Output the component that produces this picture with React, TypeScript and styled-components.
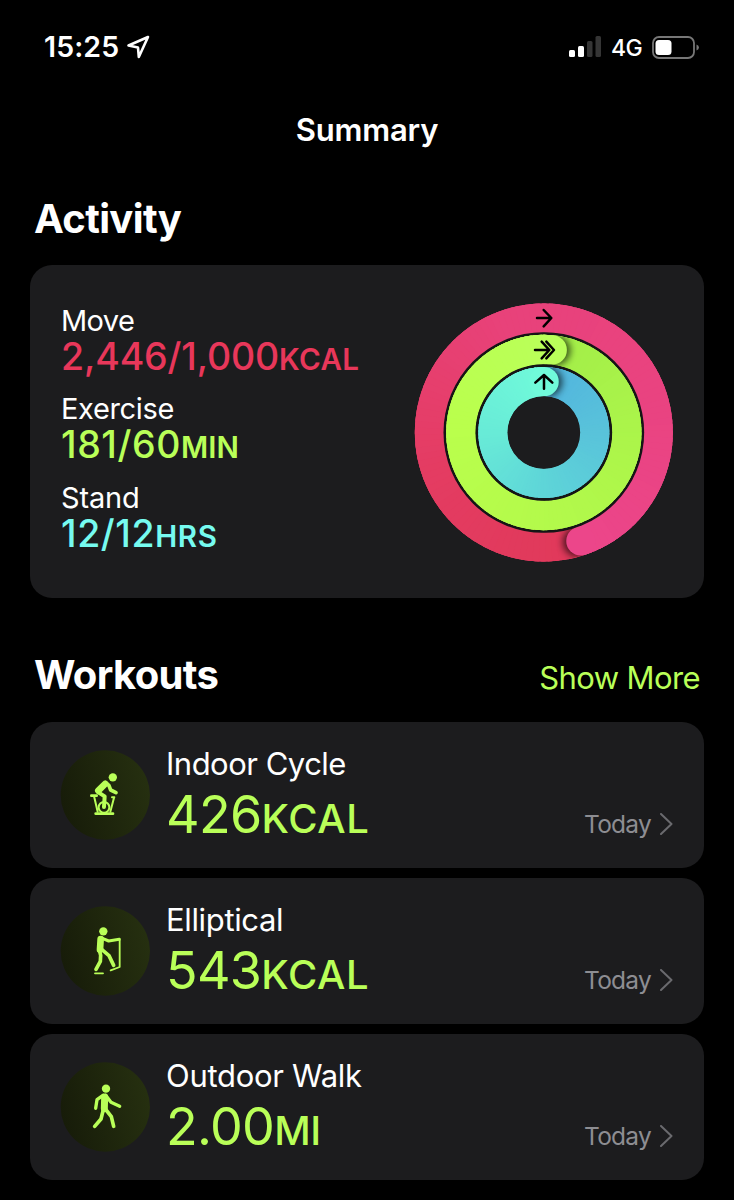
import React from "react";
import styled, { createGlobalStyle } from "styled-components";

const GlobalStyle = createGlobalStyle`
  * { box-sizing: border-box; }
  body {
    margin: 0;
    background: #000;
    color: #fff;
    font-family: Inter, "Liberation Sans", sans-serif;
    overflow: hidden;
  }
`;

const Screen = styled.main`
  width: 734px;
  height: 1200px;
  padding: 0 30px;
  background: #000;
  overflow: hidden;
`;

const StatusBar = styled.header`
  display: flex;
  justify-content: space-between;
  height: 94px;
  padding: 0 4px 0 14px;
`;

const StatusGroup = styled.div`
  display: flex;
  align-items: center;
  height: 94px;
`;

const Clock = styled.span`
  font-size: 28.5px;
  font-weight: 600;
  line-height: 36px;
  letter-spacing: 0.1px;
  margin: 0 7px 1px 0;
`;

const Network = styled.span`
  font-size: 23px;
  font-weight: 500;
  line-height: 30px;
  margin: 1px 10px 0 9px;
  letter-spacing: -0.6px;
`;

const NavTitle = styled.h1`
  margin: 0;
  height: 72px;
  font-size: 31px;
  font-weight: 600;
  line-height: 72px;
  text-align: center;
  letter-spacing: -0.2px;
`;

const SectionHead = styled.div<{ $top: number }>`
  display: flex;
  justify-content: space-between;
  align-items: center;
  height: 50px;
  margin-top: ${(p) => p.$top}px;
  padding: 0 4px;
`;

const SectionTitle = styled.h2`
  margin: 0;
  font-size: 40px;
  font-weight: 700;
  line-height: 50px;
  letter-spacing: -0.65px;
`;

const ShowMore = styled.a`
  color: #b9ff58;
  font-size: 31px;
  line-height: 40px;
  margin-top: 6px;
  letter-spacing: -0.6px;
`;

const Card = styled.section`
  background: #1c1c1e;
  border-radius: 22px;
`;

const ActivityCard = styled(Card)`
  display: flex;
  justify-content: space-between;
  height: 333px;
  margin-top: 21px;
  padding: 30px 19px 0 31px;
`;

const Metrics = styled.div`
  display: flex;
  flex-direction: column;
  gap: 19.3px;
  padding-top: 8px;
`;

const MetricLabel = styled.div<{ $spacing: number }>`
  font-size: 29px;
  font-weight: 400;
  line-height: 36px;
  letter-spacing: ${(p) => p.$spacing}px;
`;

const MetricValue = styled.div<{ $color: string; $spacing: number }>`
  color: ${(p) => p.$color};
  font-size: 37.5px;
  font-weight: 500;
  line-height: 35px;
  height: 33px;
  letter-spacing: ${(p) => p.$spacing}px;
  white-space: nowrap;
`;

const Unit = styled.span<{ $size: number; $spacing: number; $weight: number }>`
  font-size: ${(p) => p.$size}px;
  font-weight: ${(p) => p.$weight};
  line-height: 0;
  letter-spacing: ${(p) => p.$spacing}px;
`;

const WorkoutList = styled.div`
  display: flex;
  flex-direction: column;
  gap: 10px;
  margin-top: 22px;
`;

const WorkoutCard = styled(Card)`
  display: flex;
  height: 146px;
  padding: 22px 31px 0 30px;
`;

const WorkoutText = styled.div`
  flex: 1;
  margin-left: 15px;
`;

const WorkoutName = styled.div<{ $spacing: number }>`
  font-size: 31px;
  line-height: 39px;
  letter-spacing: ${(p) => p.$spacing}px;
`;

const WorkoutValue = styled.div`
  margin-top: 6px;
  color: #b9ff58;
  font-size: 52px;
  font-weight: 400;
  line-height: 51px;
  letter-spacing: -0.7px;
`;

const Day = styled.div`
  display: flex;
  align-items: center;
  gap: 9px;
  height: 32px;
  margin-top: 64px;
  color: #8d8d92;
  font-size: 24.5px;
  line-height: 32px;
  letter-spacing: -0.75px;
`;

const IconSvg = styled.svg`
  display: block;
  flex: none;
  margin-top: 6px;
`;

const Graphic = styled.svg`
  display: block;
  flex: none;
`;

type RGB = [number, number, number];
const CX = 416.5;
const CY = 412.5;

const point = (r: number, deg: number) => {
  const a = (deg * Math.PI) / 180;
  return [CX + r * Math.sin(a), CY - r * Math.cos(a)];
};

const mix = (stops: RGB[], t: number) => {
  const s = t * (stops.length - 1);
  const i = Math.min(Math.floor(s), stops.length - 2);
  const c = stops[i].map((v, k) => Math.round(v + (stops[i + 1][k] - v) * (s - i)));
  return `rgb(${c.join(",")})`;
};

interface RingProps {
  id: string;
  radius: number;
  width: number;
  tip: number;
  stops: RGB[];
}

function Ring({ id, radius, width, tip, stops }: RingProps) {
  const steps = 120;
  const step = 360 / steps;
  const inner = radius - width / 2;
  const outer = radius + width / 2;
  const [tx, ty] = point(radius, tip);
  const [sx, sy] = point(radius, tip + 600 / radius);
  return (
    <g>
      <clipPath id={`${id}-band`}>
        <path
          clipRule="evenodd"
          d={`M${CX - outer} ${CY}a${outer} ${outer} 0 1 0 ${outer * 2} 0a${outer} ${outer} 0 1 0 ${-outer * 2} 0M${CX - inner} ${CY}a${inner} ${inner} 0 1 0 ${inner * 2} 0a${inner} ${inner} 0 1 0 ${-inner * 2} 0`}
        />
      </clipPath>
      <circle cx={CX} cy={CY} r={radius} fill="none" stroke={mix(stops, 0.5)} strokeWidth={width} />
      {Array.from({ length: steps }, (_, i) => {
        const a = tip + i * step;
        const [x1, y1] = point(radius, a);
        const [x2, y2] = point(radius, a + step + (i < steps - 1 ? 2 : 0));
        return (
          <path
            key={i}
            d={`M${x1} ${y1}A${radius} ${radius} 0 0 1 ${x2} ${y2}`}
            fill="none"
            stroke={mix(stops, i / (steps - 1))}
            strokeWidth={width}
          />
        );
      })}
      <g clipPath={`url(#${id}-band)`}>
        <circle cx={sx} cy={sy} r={width / 2} fill="#000" opacity="0.65" filter="url(#soft)" />
      </g>
      {Array.from({ length: 12 }, (_, i) => {
        const a = tip - (12 - i) * step;
        const [x1, y1] = point(radius, a);
        const [x2, y2] = point(radius, a + step + (i < 11 ? 2 : 0.3));
        return (
          <path
            key={i}
            d={`M${x1} ${y1}A${radius} ${radius} 0 0 1 ${x2} ${y2}`}
            fill="none"
            stroke={mix(stops, (steps - 12 + i) / (steps - 1))}
            strokeWidth={width}
          />
        );
      })}
      <circle cx={tx} cy={ty} r={width / 2} fill={mix(stops, 1)} />
    </g>
  );
}

function ActivityRings() {
  return (
    <Graphic width="280" height="280" viewBox="0 0 840 840">
      <defs>
        <filter id="soft" x="-50%" y="-50%" width="200%" height="200%">
          <feGaussianBlur stdDeviation="11" />
        </filter>
      </defs>
      <Ring id="move" radius={343.5} width={87} tip={161.2} stops={[[224, 57, 90], [228, 60, 98], [232, 66, 122], [233, 67, 128], [236, 70, 138]]} />
      <circle cx={CX} cy={CY} r="301" fill="#151516" />
      <Ring id="exercise" radius={249} width={88} tip={5.8} stops={[[163, 238, 73], [172, 245, 74], [180, 250, 75], [186, 255, 76], [186, 255, 90]]} />
      <circle cx={CX} cy={CY} r="205" fill="#151516" />
      <Ring id="stand" radius={152.5} width={88} tip={0.3} stops={[[82, 180, 222], [89, 195, 218], [94, 213, 216], [104, 235, 215], [112, 250, 218]]} />
      <circle cx={CX} cy={CY} r="109" fill="#1c1c1e" />
      <g fill="none" stroke="#000" strokeWidth="7.5" strokeLinecap="round" strokeLinejoin="round">
        <path d="M396 69H438M416 45L439 69L416 94" />
        <path d="M390 165H433M410 140L433 165L410 190M424 140L447 165L424 190" />
        <path d="M417 281V240M391 263L417 240L442 263" />
      </g>
    </Graphic>
  );
}

type WorkoutKind = "cycle" | "elliptical" | "walk";

const glyphs: Record<WorkoutKind, React.ReactNode> = {
  cycle: (
    <>
      <circle cx="189.500" cy="112" r="12.500" fill="#b9ff58" stroke="none" />
      <path d="M166 132L146 152" strokeWidth="20" />
      <path d="M168 127L178 137L183 150L199 158" strokeWidth="11" />
      <path d="M146 157L165 169L163 201" strokeWidth="12" />
      <path d="M125 167H141" strokeWidth="8" />
      <path d="M133 168L144 215M193 173L182 215" strokeWidth="6" />
      <path d="M187 172H194" strokeWidth="6" />
      <circle cx="163" cy="202" r="16" strokeWidth="6" />
      <path d="M138 221H190" strokeWidth="8" />
    </>
  ),
  elliptical: (
    <>
      <circle cx="161" cy="106" r="12.500" fill="#b9ff58" stroke="none" />
      <path d="M153 129L151 161" strokeWidth="20" />
      <path d="M153 125L177 135L209 130" strokeWidth="9" />
      <path d="M149 162L153 178L152 196L139 220" strokeWidth="11" />
      <path d="M156 160L178 179L192 208" strokeWidth="11" />
      <path d="M210 132V213L183 223" strokeWidth="5.500" />
      <path d="M136 232H160" strokeWidth="5.500" />
    </>
  ),
  walk: (
    <>
      <circle cx="169" cy="110" r="12.500" fill="#b9ff58" stroke="none" />
      <path d="M165 135L164 170" strokeWidth="21" />
      <path d="M160 130L142 143L138 169" strokeWidth="10" />
      <path d="M168 130L184 151L210 163" strokeWidth="10" />
      <path d="M161 173L154 201L135 223" strokeWidth="11" />
      <path d="M167 171L185 194L192 223" strokeWidth="11" />
    </>
  ),
};

function WorkoutIcon({ kind }: { kind: WorkoutKind }) {
  return (
    <IconSvg width="91" height="90" viewBox="31 30 273 270">
      <defs>
        <linearGradient id={`disc-${kind}`} x1="0" y1="0.55" x2="1" y2="0.3">
          <stop offset="0" stopColor="#171c09" />
          <stop offset="1" stopColor="#263010" />
        </linearGradient>
      </defs>
      <circle cx="167" cy="165" r="134" fill={`url(#disc-${kind})`} />
      <g fill="none" stroke="#b9ff58" strokeLinecap="round" strokeLinejoin="round">
        {glyphs[kind]}
      </g>
    </IconSvg>
  );
}

const metrics = [
  { label: "Move", value: "2,446/1,000", unit: "KCAL", color: "#e8375a", spacing: -0.15, labelSpacing: -0.6, unitSpacing: 0.4 },
  { label: "Exercise", value: "181/60", unit: "MIN", color: "#b9ff58", spacing: 0.6, labelSpacing: -0.35, unitSpacing: 0 },
  { label: "Stand", value: "12/12", unit: "HRS", color: "#76fbf0", spacing: 0.6, labelSpacing: -0.15, unitSpacing: 0.6 },
];

const workouts: { kind: WorkoutKind; name: string; value: string; unit: string; spacing: number; unitSpacing: number }[] = [
  { kind: "cycle", name: "Indoor Cycle", value: "426", unit: "KCAL", spacing: -0.5, unitSpacing: 0.6 },
  { kind: "elliptical", name: "Elliptical", value: "543", unit: "KCAL", spacing: -0.35, unitSpacing: 0.6 },
  { kind: "walk", name: "Outdoor Walk", value: "2.00", unit: "MI", spacing: -0.3, unitSpacing: -0.4 },
];

export default function App() {
  return (
    <Screen>
      <GlobalStyle />
      <StatusBar>
        <StatusGroup>
          <Clock>15:25</Clock>
          <Graphic width="24" height="24" viewBox="0 0 24 24">
            <path d="M22 2L2.500 10.500L12 12.500L12.800 22Z" fill="none" stroke="#fff" strokeWidth="2.600" strokeLinejoin="round" />
          </Graphic>
        </StatusGroup>
        <StatusGroup>
          <Graphic width="33" height="22" viewBox="0 0 33 22">
            <rect x="0" y="14" width="6" height="7" rx="1.500" fill="#fff" />
            <rect x="9" y="10" width="6" height="11" rx="1.500" fill="#fff" />
            <rect x="18" y="5" width="5.500" height="16" rx="1.500" fill="#353535" />
            <rect x="26.500" y="0" width="5.500" height="21" rx="1.500" fill="#353535" />
          </Graphic>
          <Network>4G</Network>
          <Graphic width="48" height="23" viewBox="0 0 48 23">
            <rect x="1" y="1" width="41" height="21" rx="6" fill="none" stroke="#777" strokeWidth="1.800" />
            <rect x="3.500" y="4" width="16" height="15" rx="3.500" fill="#fff" />
            <path d="M44.500 8.500Q47 9.500 47 11.500T44.500 14.500Z" fill="#777" />
          </Graphic>
        </StatusGroup>
      </StatusBar>
      <NavTitle>Summary</NavTitle>
      <SectionHead $top={28}>
        <SectionTitle>Activity</SectionTitle>
      </SectionHead>
      <ActivityCard>
        <Metrics>
          {metrics.map((m) => (
            <div key={m.label}>
              <MetricLabel $spacing={m.labelSpacing}>{m.label}</MetricLabel>
              <MetricValue $color={m.color} $spacing={m.spacing}>
                {m.value}
                <Unit $size={29.5} $spacing={m.unitSpacing} $weight={600}>{m.unit}</Unit>
              </MetricValue>
            </div>
          ))}
        </Metrics>
        <ActivityRings />
      </ActivityCard>
      <SectionHead $top={52}>
        <SectionTitle>Workouts</SectionTitle>
        <ShowMore>Show More</ShowMore>
      </SectionHead>
      <WorkoutList>
        {workouts.map((w) => (
          <WorkoutCard key={w.kind}>
            <WorkoutIcon kind={w.kind} />
            <WorkoutText>
              <WorkoutName $spacing={w.spacing}>{w.name}</WorkoutName>
              <WorkoutValue>
                {w.value}
                <Unit $size={40} $spacing={w.unitSpacing} $weight={500}>{w.unit}</Unit>
              </WorkoutValue>
            </WorkoutText>
            <Day>
              Today
              <Graphic width="13" height="22" viewBox="0 0 13 22">
                <path d="M1 1L11.500 11L1 21" fill="none" stroke="#6a6a6e" strokeWidth="2" strokeLinecap="round" strokeLinejoin="round" />
              </Graphic>
            </Day>
          </WorkoutCard>
        ))}
      </WorkoutList>
    </Screen>
  );
}
